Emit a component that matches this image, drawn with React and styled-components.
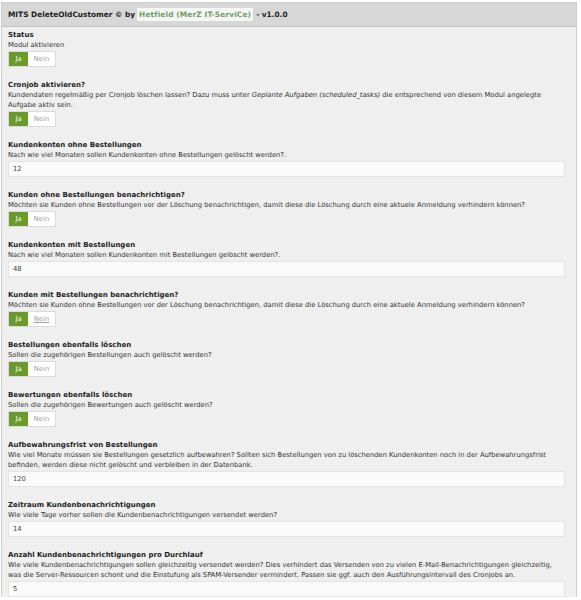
import React from 'react';
import styled, { createGlobalStyle } from 'styled-components';

const GlobalStyle = createGlobalStyle`
    body {
        margin: 0;
        background: #ffffff;
        font-family: "DejaVu Sans", Verdana, sans-serif;
        font-size: 6.75px;
        color: #333333;
    }
`;

const Panel = styled.div`
    margin: 2px 0 0 1px;
    width: 576px;
    border: 1px solid #cdcdcd;
    border-bottom: none;
    background: #efefef;
    box-sizing: border-box;
`;

const Header = styled.div`
    display: flex;
    align-items: center;
    height: 23px;
    padding-left: 6px;
    background: #d7d7d7;
    border-bottom: 1px solid #c4c4c4;
    font-size: 7.4px;
    font-weight: bold;
    color: #222222;
    white-space: pre;
`;

const Author = styled.span`
    margin: 0 3px 0 2px;
    background: #f6f6f6;
    color: #6f9d63;
    padding: 2px 2px;
    letter-spacing: 0.15px;
`;

const Body = styled.div`
    padding: 3px 11px 0 6px;
`;

const Section = styled.div`
    margin-bottom: 13px;
`;

const Title = styled.div`
    font-size: 7px;
    font-weight: bold;
    color: #1e1e1e;
    line-height: 10px;
`;

const Desc = styled.div`
    line-height: 10px;
    color: #333333;
    white-space: nowrap;
`;

const Toggle = styled.div`
    display: inline-flex;
    margin-top: 1px;
    height: 16px;
    border: 1px solid #dadada;
    background: #ffffff;
    box-sizing: border-box;
`;

const Option = styled.span`
    display: flex;
    align-items: center;
    justify-content: center;
    width: ${p => (p.$wide ? '27px' : '19px')};
    background: ${p => (p.$active ? '#6a9a2b' : '#ffffff')};
    color: ${p => (p.$active ? '#ffffff' : '#a0a0a0')};
    text-decoration: ${p => (p.$underline ? 'underline' : 'none')};
`;

const Input = styled.div`
    display: flex;
    align-items: center;
    margin-top: 1px;
    height: 16px;
    padding-left: 4px;
    background: #fafafa;
    border: 1px solid #e4e4e4;
    box-sizing: border-box;
    color: #444444;
`;

function YesNo({ underline }) {
    return (
        <Toggle>
            <Option $active>Ja</Option>
            <Option $wide $underline={underline}>Nein</Option>
        </Toggle>
    );
}

const sections = [
    { title: 'Status', desc: ['Modul aktivieren'], toggle: true },
    {
        title: 'Cronjob aktivieren?',
        desc: [
            <>Kundendaten regelmäßig per Cronjob löschen lassen? Dazu muss unter <i>Geplante Aufgaben (scheduled_tasks)</i> die entsprechend von diesem Modul angelegte</>,
            'Aufgabe aktiv sein.',
        ],
        toggle: true,
    },
    { title: 'Kundenkonten ohne Bestellungen', desc: ['Nach wie viel Monaten sollen Kundenkonten ohne Bestellungen gelöscht werden?.'], value: '12' },
    { title: 'Kunden ohne Bestellungen benachrichtigen?', desc: ['Möchten sie Kunden ohne Bestellungen vor der Löschung benachrichtigen, damit diese die Löschung durch eine aktuele Anmeldung verhindern können?'], toggle: true },
    { title: 'Kundenkonten mit Bestellungen', desc: ['Nach wie viel Monaten sollen Kundenkonten mit Bestellungen gelöscht werden?.'], value: '48' },
    { title: 'Kunden mit Bestellungen benachrichtigen?', desc: ['Möchten sie Kunden ohne Bestellungen vor der Löschung benachrichtigen, damit diese die Löschung durch eine aktuele Anmeldung verhindern können?'], toggle: true, underline: true },
    { title: 'Bestellungen ebenfalls löschen', desc: ['Sollen die zugehörigen Bestellungen auch gelöscht werden?'], toggle: true },
    { title: 'Bewertungen ebenfalls löschen', desc: ['Sollen die zugehörigen Bewertungen auch gelöscht werden?'], toggle: true },
    {
        title: 'Aufbewahrungsfrist von Bestellungen',
        desc: [
            'Wie viel Monate müssen sie Bestellungen gesetzlich aufbewahren? Sollten sich Bestellungen von zu löschenden Kundenkonten noch in der Aufbewahrungsfrist',
            'befinden, werden diese nicht gelöscht und verbleiben in der Datenbank.',
        ],
        value: '120',
    },
    { title: 'Zeitraum Kundenbenachrichtigungen', desc: ['Wie viele Tage vorher sollen die Kundenbenachrichtigungen versendet werden?'], value: '14' },
    {
        title: 'Anzahl Kundenbenachrichtigungen pro Durchlauf',
        desc: [
            'Wie viele Kundenbenachrichtigungen sollen gleichzeitig versendet werden? Dies verhindert das Versenden von zu vielen E-Mail-Benachrichtigungen gleichzeitig,',
            'was die Server-Ressourcen schont und die Einstufung als SPAM-Versender vermindert. Passen sie ggf. auch den Ausführungsintervall des Cronjobs an.',
        ],
        value: '5',
    },
];

export default function App() {
    return (
        <>
            <GlobalStyle />
            <Panel>
                <Header>
                    MITS DeleteOldCustomer © by<Author>Hetfield (MerZ IT-ServiCe)</Author>- v1.0.0
                </Header>
                <Body>
                    {sections.map((s, i) => (
                        <Section key={i}>
                            <Title>{s.title}</Title>
                            {s.desc.map((line, j) => (
                                <Desc key={j}>{line}</Desc>
                            ))}
                            {s.toggle ? <YesNo underline={s.underline} /> : <Input>{s.value}</Input>}
                        </Section>
                    ))}
                </Body>
            </Panel>
        </>
    );
}
